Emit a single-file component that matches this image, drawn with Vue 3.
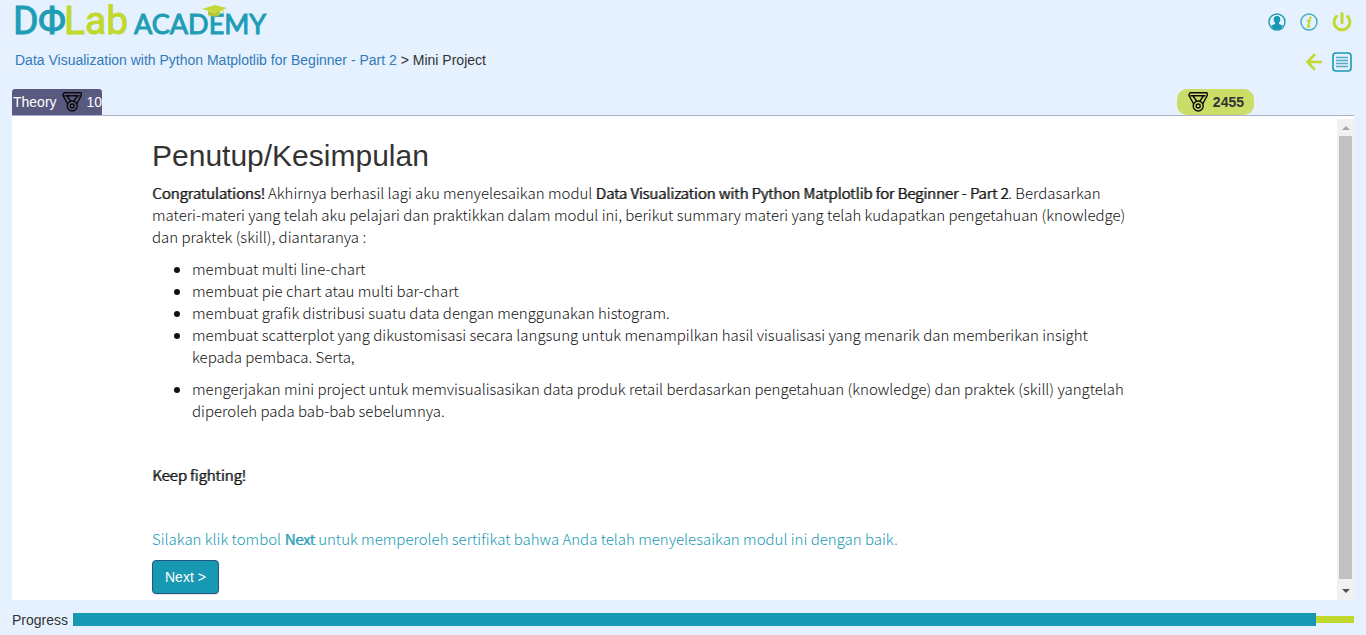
<script setup>
import { ref } from 'vue'

const points = ref(2455)
const progress = ref(97)
const topics = [
  'membuat multi line-chart',
  'membuat pie chart atau multi bar-chart',
  'membuat grafik distribusi suatu data dengan menggunakan histogram.',
  'membuat scatterplot yang dikustomisasi secara langsung untuk menampilkan hasil visualisasi yang menarik dan memberikan insight kepada pembaca. Serta,',
  'mengerjakan mini project untuk memvisualisasikan data produk retail berdasarkan pengetahuan (knowledge) dan praktek (skill) yangtelah diperoleh pada bab-bab sebelumnya.'
]
</script>

<template>
  <div class="page">
    <header class="top">
      <a href="#" class="brand" aria-label="DQLab Academy">
        <svg width="256" height="42" viewBox="0 0 256 42">
          <text class="big teal" x="-2" y="34">D</text>
          <text class="big teal" x="23" y="34">Φ</text>
          <text class="big lime" x="49" y="34">Lab</text>
          <text class="small teal" x="119" y="34">ACADEMY</text>
          <path d="M187 9l13-4 12 3-11 5z" fill="#c5d936" />
          <path d="M193 11v4q6 3 12 0v-4l-5 2z" fill="#b4c82f" />
          <path d="M208 8v5" stroke="#c5d936" stroke-width="1" />
        </svg>
      </a>
      <nav class="tools" aria-label="Akun">
        <button type="button" aria-label="Profil">
          <svg width="18" height="18" viewBox="0 0 18 18">
            <circle cx="9" cy="9" r="8" fill="#e5f1ff" stroke="#1899b3" stroke-width="1.4" />
            <path d="M9 3c2.400 0 3.500 1.700 3.300 3.800-.1 1.300-.6 2.200-1.300 2.900v1.200l3.600 1.500c-1.200 2.200-3.200 3.600-5.600 3.600s-4.400-1.400-5.600-3.600L7 10.900V9.700C6.300 9 5.800 8.100 5.700 6.800 5.500 4.700 6.600 3 9 3z" fill="#1899b3" />
            <path d="M3 12.500h12L12.500 16h-7z" fill="#1899b3" />
          </svg>
        </button>
        <button type="button" aria-label="Informasi">
          <svg width="18" height="18" viewBox="0 0 18 18">
            <circle cx="9" cy="9" r="8" fill="none" stroke="#43abc0" stroke-width="1.4" />
            <circle cx="10.300" cy="4.800" r="1.400" fill="#c1d82f" />
            <path d="M6.800 7.500h2.900L8.200 13.500h2.200" fill="none" stroke="#c1d82f" stroke-width="2.200" />
          </svg>
        </button>
        <button type="button" aria-label="Keluar">
          <svg width="20" height="20" viewBox="0 0 20 20" fill="none" stroke="#c1d82f" stroke-width="3" stroke-linecap="round">
            <path d="M10 1.500v9M4.400 4.400a7.900 7.900 0 1 0 11.200 0" />
          </svg>
        </button>
      </nav>
    </header>

    <div class="crumbs">
      <p><a href="#">Data Visualization with Python Matplotlib for Beginner - Part 2</a> &gt; Mini Project</p>
      <nav class="steps" aria-label="Modul">
        <button type="button" aria-label="Kembali">
          <svg width="18" height="18" viewBox="0 0 18 18" fill="none" stroke="#c1d82f" stroke-width="2.600">
            <path d="M17 9H2M10 1.200L2.500 9l7.500 7.800" />
          </svg>
        </button>
        <button type="button" aria-label="Daftar isi">
          <svg width="20" height="20" viewBox="0 0 20 20" fill="none" stroke="#1899b3">
            <rect x="1" y="1" width="18" height="18" rx="3" stroke-width="1.600" />
            <path d="M4 5.500h12M4 8.500h12M4 11.500h12M4 14.500h12" stroke="#53acc4" stroke-width="1.300" />
          </svg>
        </button>
      </nav>
    </div>

    <div class="tabs">
      <button type="button" class="tab">
        Theory
        <svg class="medal" viewBox="0 0 20 20"><use href="#medal-shape" /></svg>
        10
      </button>
      <div class="points">
        <svg class="medal" viewBox="0 0 20 20">
          <g id="medal-shape" fill="none" stroke="#0b0b0b" stroke-width="1.400" stroke-linejoin="round">
            <path d="M5.700 12L.8 3.200l1.200-2.400L19 .8l.4 2.400L14.700 12M2.500 3.800h15M5 4l4 5.500M15.500 4l-4 5.500" />
            <circle cx="10.200" cy="14" r="5" />
            <circle cx="10.200" cy="14" r="2" />
          </g>
        </svg>
        <span>{{ points }}</span>
      </div>
    </div>

    <main class="panel">
      <article class="lesson">
        <h1>Penutup/Kesimpulan</h1>
        <p>
          <strong>Congratulations!</strong> Akhirnya berhasil lagi aku menyelesaikan modul
          <strong>Data Visualization with Python Matplotlib for Beginner - Part 2</strong>. Berdasarkan
          materi-materi yang telah aku pelajari dan praktikkan dalam modul ini, berikut summary materi yang
          telah kudapatkan pengetahuan (knowledge) dan praktek (skill), diantaranya :
        </p>
        <ul>
          <li v-for="topic in topics" :key="topic">{{ topic }}</li>
        </ul>
        <p class="cheer"><strong>Keep fighting!</strong></p>
        <p class="hint">
          Silakan klik tombol <strong>Next</strong> untuk memperoleh sertifikat bahwa Anda telah
          menyelesaikan modul ini dengan baik.
        </p>
        <button type="button" class="next">Next &gt;</button>
      </article>
      <div class="scroll" aria-hidden="true">
        <span class="arrow up"></span>
        <span class="thumb"></span>
        <span class="arrow down"></span>
      </div>
    </main>

    <footer class="progress">
      <span id="progress-label">Progress</span>
      <div class="track" role="progressbar" aria-labelledby="progress-label" :aria-valuenow="progress">
        <div class="done" :style="{ width: progress + '%' }"></div>
        <div class="rest"></div>
      </div>
    </footer>
  </div>
</template>

<style>
body {
  background: #e5f1ff;
}
</style>

<style scoped>
* {
  box-sizing: border-box;
}
.page {
  display: flex;
  flex-direction: column;
  min-height: 100vh;
  padding: 0 12px;
  font: 14px/20px "Liberation Sans", Arial, sans-serif;
  color: #333;
}
button {
  font: inherit;
  cursor: pointer;
}
a {
  color: #337ab7;
  text-decoration: none;
}
.top,
.crumbs {
  display: flex;
  justify-content: space-between;
  padding: 0 2px 0 3px;
}
.top {
  height: 43px;
  align-items: center;
}
.brand svg {
  display: block;
  overflow: visible;
}
.brand {
  align-self: flex-start;
}
.big {
  font: 39px Roboto, sans-serif;
}
.small {
  font: 27px Lato, sans-serif;
}
.big,
.small {
  stroke-width: 1px;
}
.teal {
  fill: #1f9db5;
  stroke: #1f9db5;
}
.lime {
  fill: #c1d82f;
  stroke: #c1d82f;
}
.tools,
.steps {
  display: flex;
  align-items: center;
}
.tools {
  gap: 14px;
}
.steps {
  gap: 9px;
}
.tools button,
.steps button {
  padding: 0;
  border: 0;
  background: none;
}
.tools svg,
.steps svg {
  display: block;
}
.crumbs {
  height: 37px;
  align-items: center;
}
.crumbs p {
  margin: 0 0 3px;
}
.tabs {
  display: flex;
  justify-content: space-between;
  margin-top: 9px;
  border-bottom: 1px solid #a9b0cd;
}
.tab,
.points {
  display: flex;
  align-items: center;
  height: 26px;
}
.tab {
  gap: 5px;
  padding: 0 0 0 1px;
  border: 0;
  border-radius: 3px 3px 0 0;
  background: #5a5a80;
  color: #fff;
}
.medal {
  width: 20px;
  height: 20px;
}
.points {
  gap: 5px;
  margin-right: 100px;
  padding: 0 10px 0 11px;
  border-radius: 10px;
  background: #cadd67;
  font-weight: bold;
}
.panel {
  display: flex;
  flex: 1;
  background: #fff;
}
.lesson {
  flex: 1;
  padding: 23px 200px 6px 140px;
  font: 300 15px/22px "Noto Sans CJK JP", sans-serif;
  color: #111;
}
h1 {
  margin: 0 0 10px;
  font: 30px/33px "Liberation Sans", Arial, sans-serif;
  color: #333;
}
.lesson p {
  margin: 0 0 10px;
}
.lesson strong {
  font-weight: 300;
  text-shadow: 1px 0 0 currentColor;
}
.lesson ul {
  margin: 0 0 42px;
  padding-left: 40px;
}
.lesson li:last-child {
  margin-top: 10px;
}
.lesson .cheer {
  margin-bottom: 42px;
}
.lesson .hint {
  color: #1899b3;
}
.next {
  display: block;
  height: 34px;
  padding: 0 12px;
  border: 1px solid #245580;
  border-radius: 4px;
  background: #1899b3;
  box-shadow: 0 1px 1px rgba(0, 0, 0, 0.1);
  color: #fff;
  font: 14px/20px "Liberation Sans", Arial, sans-serif;
}
.scroll {
  display: flex;
  flex-direction: column;
  align-items: center;
  width: 17px;
  margin-top: 3px;
  background: #f1f1f1;
}
.thumb {
  flex: 1;
  width: 13px;
  background: #c1c1c1;
}
.arrow {
  width: 0;
  border: 4px solid transparent;
}
.up {
  margin: 7px 0 6px;
  border-top: 0;
  border-bottom-color: #a3a3a3;
}
.down {
  margin: 10px 0 7px;
  border-bottom: 0;
  border-top-color: #505050;
}
.progress {
  display: flex;
  align-items: center;
  gap: 5px;
  height: 35px;
  padding-top: 4px;
}
.track {
  display: flex;
  flex: 1;
  align-items: center;
}
.done {
  height: 13px;
  background: #1899b3;
}
.rest {
  flex: 1;
  height: 7px;
  background: #c1d82f;
}
</style>
